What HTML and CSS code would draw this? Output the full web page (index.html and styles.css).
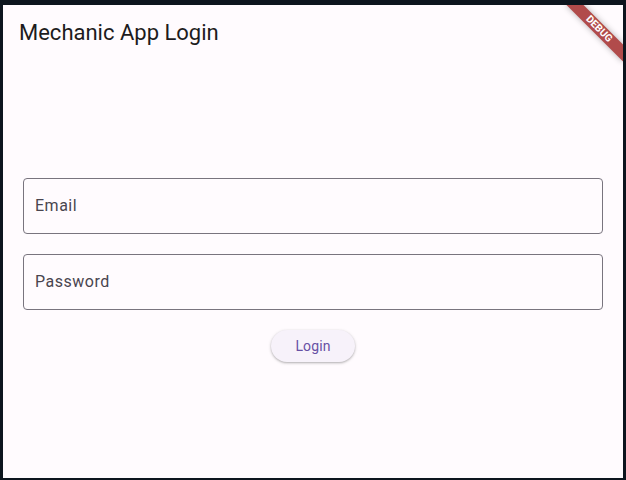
FILE: index.html
```html
<!DOCTYPE html>
<html lang="en">
<head>
<meta charset="utf-8">
<title>Mechanic App Login</title>
<link rel="stylesheet" href="styles.css">
</head>
<body>
<div class="app">
  <header class="appbar">
    <h1 class="title">Mechanic App Login</h1>
  </header>
  <main class="content">
    <form class="form">
      <label class="field"><input class="input" type="email" placeholder="Email"></label>
      <label class="field"><input class="input" type="password" placeholder="Password"></label>
      <button class="btn" type="button">Login</button>
    </form>
  </main>
  <div class="debug">DEBUG</div>
</div>
</body>
</html>
```

FILE: styles.css
```css
html, body {
  margin: 0;
  height: 100%;
}
body {
  background: #0d151e;
  box-sizing: border-box;
  padding: 5px 3px 2px 3px;
  font-family: Roboto, "Noto Sans", sans-serif;
}
.app {
  position: relative;
  overflow: hidden;
  height: 100%;
  background: #fffbfe;
  display: flex;
  flex-direction: column;
}
.appbar {
  height: 56px;
  flex: 0 0 56px;
  display: flex;
  align-items: center;
  padding-left: 16px;
}
.title {
  margin: 0;
  font-size: 22px;
  font-weight: 400;
  color: #1d1b20;
  line-height: 28px;
}
.content {
  flex: 1;
  display: flex;
  align-items: center;
  padding: 0 20px;
}
.form {
  width: 100%;
  display: flex;
  flex-direction: column;
  align-items: center;
  gap: 20px;
}
.field {
  display: block;
  width: 100%;
}
.input {
  display: block;
  width: 100%;
  box-sizing: border-box;
  height: 56px;
  border: 1px solid #79747e;
  border-radius: 4px;
  background: transparent;
  padding: 0 11px;
  font-family: Roboto, sans-serif;
  font-size: 16px;
  letter-spacing: 0.5px;
  color: #1d1b20;
  outline: none;
}
.input::placeholder {
  color: #49454f;
  opacity: 1;
}
.btn {
  height: 32px;
  padding: 0 24px;
  border: none;
  border-radius: 16px;
  background: #f7f2fa;
  color: #6750a4;
  font-family: Roboto, sans-serif;
  font-size: 14px;
  font-weight: 400;
  letter-spacing: 0.1px;
  box-shadow: 0 1px 2px rgba(0,0,0,0.22), 0 1px 3px 1px rgba(0,0,0,0.08);
  cursor: pointer;
}
.debug {
  position: absolute;
  top: 18px;
  right: -16px;
  width: 80px;
  height: 12px;
  transform: rotate(45deg);
  background: #b14b4b;
  box-shadow: 0 0 6px rgba(0,0,0,0.3);
  color: #fff;
  font-family: Roboto, sans-serif;
  font-size: 10.2px;
  font-weight: 700;
  line-height: 12px;
  text-align: center;
}
```
